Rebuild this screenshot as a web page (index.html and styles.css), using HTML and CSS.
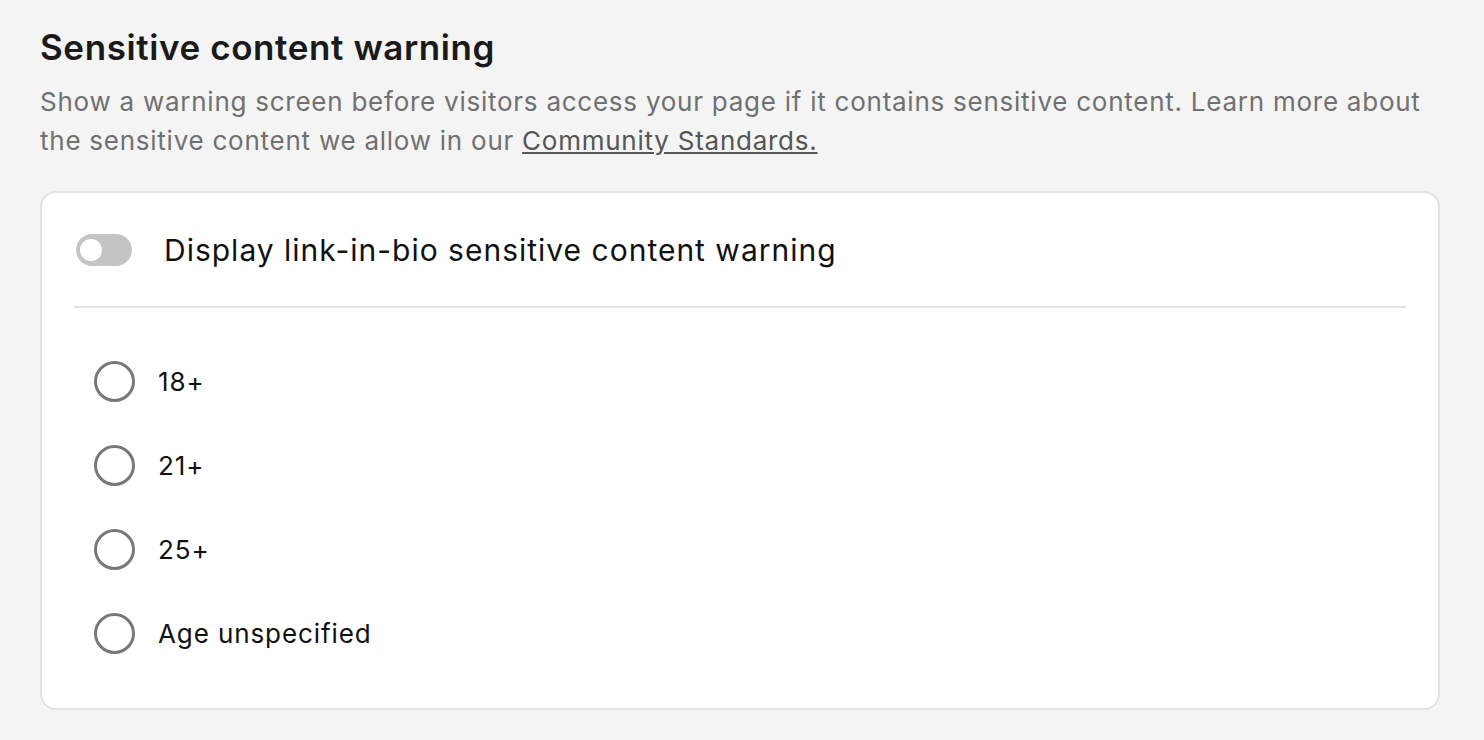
FILE: index.html
```html
<!DOCTYPE html>
<html lang="en">
<head>
    <meta charset="UTF-8">
    <title>Sensitive content warning</title>
    <link rel="stylesheet" href="styles.css">
</head>
<body>
<div class="section">
    <h1 class="title">Sensitive content warning</h1>
    <p class="desc">Show a warning screen before visitors access your page if it contains sensitive content. Learn more about the sensitive content we allow in our <a href="javascript:;">Community Standards.</a></p>
    <div class="card">
        <div class="card-head">
            <span class="toggle"><span class="knob"></span></span>
            <span class="toggle-label">Display link-in-bio sensitive content warning</span>
        </div>
        <ul class="options">
            <li><span class="radio"></span><span class="opt-label">18+</span></li>
            <li><span class="radio"></span><span class="opt-label">21+</span></li>
            <li><span class="radio"></span><span class="opt-label">25+</span></li>
            <li><span class="radio"></span><span class="opt-label">Age unspecified</span></li>
        </ul>
    </div>
</div>
</body>
</html>
```

FILE: styles.css
```css
*{
    margin:0;
    padding:0;
    list-style: none;
    box-sizing: border-box;
}
html,body{
    height: 100%;
    overflow: hidden;
}
body{
    background: #f4f4f4;
    font-family: Inter, "Noto Sans", sans-serif;
    color: #111;
}
.section{
    padding: 26px 44px 0 40px;
}
.title{
    font-size: 35px;
    font-weight: 600;
    line-height: 42px;
    letter-spacing: 0.6px;
    color: #1a1a1a;
}
.desc{
    margin-top: 14px;
    font-size: 26px;
    line-height: 39px;
    letter-spacing: 0.75px;
    color: #707070;
}
.desc a{
    color: #555;
    text-decoration: underline;
}
.card{
    margin-top: 31px;
    width: 1400px;
    background: #fff;
    border: 2px solid #e2e2e2;
    border-radius: 16px;
    padding: 0 32px 33px;
}
.card-head{
    display: flex;
    align-items: center;
    height: 115px;
    border-bottom: 2px solid #e2e2e2;
    padding-left: 2px;
}
.toggle{
    width: 56px;
    height: 32px;
    border-radius: 16px;
    background: #c4c4c4;
    display: flex;
    align-items: center;
    padding-left: 4px;
}
.knob{
    width: 22px;
    height: 22px;
    border-radius: 50%;
    background: #fff;
}
.toggle-label{
    margin-left: 32px;
    font-size: 30px;
    letter-spacing: 1px;
    color: #111;
}
.options{
    padding-top: 31px;
}
.options li{
    display: flex;
    align-items: center;
    height: 84px;
    padding-left: 20px;
}
.radio{
    width: 41px;
    height: 41px;
    border: 3px solid #787878;
    border-radius: 50%;
}
.opt-label{
    margin-left: 23px;
    font-size: 26px;
    letter-spacing: 0.9px;
    color: #111;
}
```
